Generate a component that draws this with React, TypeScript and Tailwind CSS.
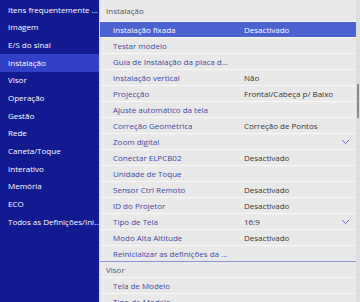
const sideItems = [
	"Itens frequentemente ...",
	"Imagem",
	"E/S do sinal",
	"Instalação",
	"Visor",
	"Operação",
	"Gestão",
	"Rede",
	"Caneta/Toque",
	"Interativo",
	"Memória",
	"ECO",
	"Todos as Definições/Ini...",
];

type Row = { label: string; value?: string; chevron?: boolean; active?: boolean };

const installRows: Row[] = [
	{ label: "Instalação fixada", value: "Desactivado", active: true },
	{ label: "Testar modelo" },
	{ label: "Guia de Instalação da placa d..." },
	{ label: "Instalação vertical", value: "Não" },
	{ label: "Projecção", value: "Frontal/Cabeça p/ Baixo" },
	{ label: "Ajuste automático da tela" },
	{ label: "Correção Geométrica", value: "Correção de Pontos" },
	{ label: "Zoom digital", chevron: true },
	{ label: "Conectar ELPCB02", value: "Desactivado" },
	{ label: "Unidade de Toque" },
	{ label: "Sensor Ctrl Remoto", value: "Desactivado" },
	{ label: "ID do Projetor", value: "Desactivado" },
	{ label: "Tipo de Tela", value: "16:9", chevron: true },
	{ label: "Modo Alta Altitude", value: "Desactivado" },
	{ label: "Reinicializar as definições da ..." },
];

function Chevron() {
	return (
		<svg width="9" height="6" viewBox="0 0 9 6" className="mr-[6px]">
			<path d="M1 1 L4.5 4.5 L8 1" fill="none" stroke="#5a68c8" strokeWidth="1" />
		</svg>
	);
}

function MenuRow({ row, last }: { row: Row; last?: boolean }) {
	return (
		<div
			className={`flex items-center h-[16px] border-b ${last ? "border-[#8a94d8]" : "border-[#f7f7f7]"} ${row.active ? "bg-[#4a63d1]" : ""}`}
		>
			<span className={`w-[144px] pl-[13px] whitespace-nowrap ${row.active ? "text-white" : "text-[#3d47a3]"}`}>
				{row.label}
			</span>
			<span className={`flex-1 whitespace-nowrap ${row.active ? "text-white" : "text-[#333333]"}`}>
				{row.value}
			</span>
			{row.chevron && <Chevron />}
		</div>
	);
}

export default function App() {
	return (
		<div
			className="w-[360px] h-[302px] flex overflow-hidden text-[8px] leading-none"
			style={{ fontFamily: '"Open Sans", "Noto Sans", sans-serif' }}
		>
			<div className="w-[100px] shrink-0 bg-[#111a91] border-r border-[#d8d8e0] pt-px">
				{sideItems.map((item) => (
					<div
						key={item}
						className={`h-[17.67px] flex items-center pl-[8px] whitespace-nowrap text-white ${item === "Instalação" ? "bg-[#3041c6]" : ""}`}
					>
						{item}
					</div>
				))}
			</div>

			<div className="flex-1 flex bg-[#e9e9e9]">
				<div className="flex-1">
					<div className="h-[22px] flex items-center pl-[6px] text-[#555555] border-b border-[#f7f7f7]">
						Instalação
					</div>
					{installRows.map((row, i) => (
						<MenuRow key={row.label} row={row} last={i === installRows.length - 1} />
					))}
					<div className="h-[16px] flex items-center pl-[6px] text-[#555555] border-b border-[#f7f7f7]">
						Visor
					</div>
					<MenuRow row={{ label: "Tela de Modelo" }} />
					<MenuRow row={{ label: "Tipo de Modelo" }} />
				</div>
				<div className="w-[4px] bg-[#dedede] flex flex-col">
					<div className="h-[84px]" />
					<div className="h-[34px] mx-px bg-[#8c8c8c]" />
				</div>
			</div>
		</div>
	);
}
